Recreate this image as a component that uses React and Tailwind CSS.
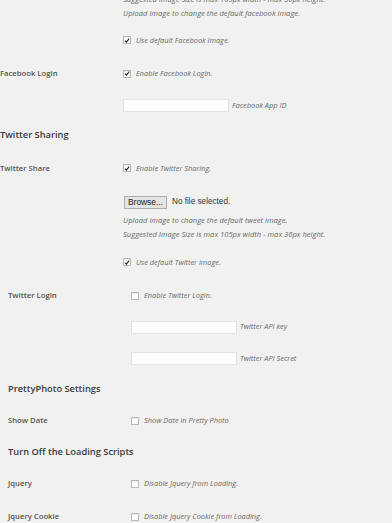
import React from "react";

const font = { fontFamily: '"Open Sans", "Liberation Sans", sans-serif' };

function Check({ checked }) {
  return (
    <span className="inline-flex h-[8px] w-[8px] shrink-0 items-center justify-center border border-[#b4b9be] bg-white shadow-[inset_0_1px_1px_rgba(0,0,0,0.08)]">
      {checked && (
        <svg width="7" height="7" viewBox="0 0 10 10">
          <path d="M1.5 5.2 L4 7.6 L8.6 1.8" fill="none" stroke="#2b2b2b" strokeWidth="1.9" />
        </svg>
      )}
    </span>
  );
}

function Desc({ children, size = "text-[7.4px]" }) {
  return <span className={`${size} italic text-[#6a6a6a]`}>{children}</span>;
}

function CheckRow({ checked, text }) {
  return (
    <div className="flex items-center gap-[5px]">
      <Check checked={checked} />
      <Desc>{text}</Desc>
    </div>
  );
}

function Row({ h, label, labelW, children }) {
  return (
    <div className={`flex items-center ${h}`}>
      <div className={`${labelW} shrink-0 text-[7.7px] font-semibold text-[#555]`}>{label}</div>
      <div className="flex items-center">{children}</div>
    </div>
  );
}

function Heading({ h, children }) {
  return (
    <div className={`flex items-center ${h} text-[9.3px] font-semibold text-[#3a3a3a]`}>{children}</div>
  );
}

function TextInput({ w, label }) {
  return (
    <div className="flex items-center gap-[3px]">
      <span className={`block h-[13px] ${w} border border-[#e2e2e2] bg-white`} />
      <Desc>{label}</Desc>
    </div>
  );
}

export default function App() {
  return (
    <div className="h-[523px] w-[392px] overflow-hidden bg-[#f1f1f1]" style={font}>
      <div className="mt-[-8px] flex">
        <div className="w-[123px] shrink-0" />
        <div className="flex flex-col leading-[14px]">
          <Desc size="text-[7.6px]">Suggested Image Size is max 105px width - max 36px height.</Desc>
          <Desc size="text-[7.6px]">Upload image to change the default facebook image.</Desc>
        </div>
      </div>
      <Row h="h-[41px]" labelW="w-[123px]" label="">
        <CheckRow checked text="Use default Facebook image." />
      </Row>
      <Row h="h-[26px]" labelW="w-[123px]" label="Facebook Login">
        <CheckRow checked text="Enable Facebook Login." />
      </Row>
      <Row h="h-[37px]" labelW="w-[123px]" label="">
        <TextInput w="w-[106px]" label="Facebook App ID" />
      </Row>
      <Heading h="h-[22px]">Twitter Sharing</Heading>
      <Row h="h-[45px]" labelW="w-[123px]" label="Twitter Share">
        <CheckRow checked text="Enable Twitter Sharing." />
      </Row>
      <Row h="h-[22px]" labelW="w-[124px]" label="">
        <div className="flex items-center gap-[5px]">
          <span
            className="flex h-[13px] w-[43px] items-center justify-center border border-[#adadad] bg-[#e5e5e5] text-[8.4px] text-[#222]"
            style={{ fontFamily: '"Liberation Sans", Arial, sans-serif' }}
          >
            Browse...
          </span>
          <span
            className="text-[8.2px] text-[#333]"
            style={{ fontFamily: '"Liberation Sans", Arial, sans-serif' }}
          >
            No file selected.
          </span>
        </div>
      </Row>
      <div className="flex">
        <div className="w-[123px] shrink-0" />
        <div className="flex flex-col leading-[14px]">
          <Desc size="text-[7.6px]">Upload image to change the default tweet image.</Desc>
          <Desc size="text-[7.6px]">Suggested Image Size is max 105px width - max 36px height.</Desc>
        </div>
      </div>
      <Row h="h-[43px]" labelW="w-[123px]" label="">
        <CheckRow checked text="Use default Twitter image." />
      </Row>
      <div className="pl-[8px]">
        <Row h="h-[24px]" labelW="w-[123px]" label="Twitter Login">
          <CheckRow text="Enable Twitter Login." />
        </Row>
        <Row h="h-[38px]" labelW="w-[123px]" label="">
          <TextInput w="w-[106px]" label="Twitter API key" />
        </Row>
        <Row h="h-[25px]" labelW="w-[123px]" label="">
          <TextInput w="w-[106px]" label="Twitter API Secret" />
        </Row>
        <Heading h="h-[36px]">PrettyPhoto Settings</Heading>
        <Row h="h-[28px]" labelW="w-[123px]" label="Show Date">
          <CheckRow text="Show Date in Pretty Photo" />
        </Row>
        <Heading h="h-[34px]">Turn Off the Loading Scripts</Heading>
        <Row h="h-[30px]" labelW="w-[123px]" label="Jquery">
          <CheckRow text="Disable Jquery from Loading." />
        </Row>
        <Row h="h-[36px]" labelW="w-[123px]" label="Jquery Cookie">
          <CheckRow text="Disable Jquery Cookie from Loading." />
        </Row>
      </div>
    </div>
  );
}
